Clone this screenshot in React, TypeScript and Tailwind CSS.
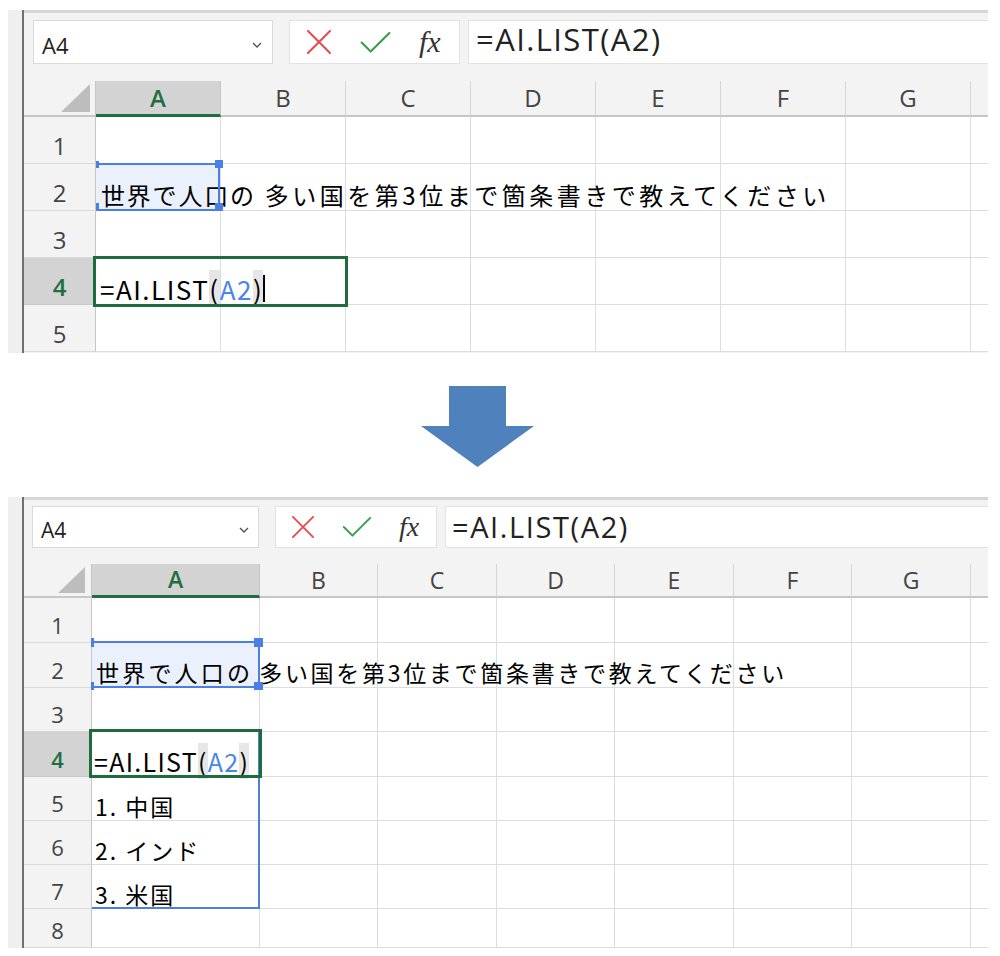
import React from "react";

const COLS = ["A", "B", "C", "D", "E", "F", "G"];
const JP = "font-['Noto_Sans_CJK_JP',sans-serif]";

function Cancel({ className }: { className: string }) {
  return (
    <svg viewBox="0 0 24 24" fill="none" className={className}>
      <path d="M1 1 L23 23 M23 1 L1 23" stroke="#e84a50" strokeWidth="2" strokeLinecap="round" />
    </svg>
  );
}

function Enter({ className }: { className: string }) {
  return (
    <svg viewBox="0 0 32 22" fill="none" className={className}>
      <path d="M1.5 11 L11 20.5 L30.5 1" stroke="#3a9e4b" strokeWidth="2.2" strokeLinecap="round" strokeLinejoin="round" />
    </svg>
  );
}

function Chevron({ className }: { className: string }) {
  return (
    <svg viewBox="0 0 10 6" fill="none" className={className}>
      <path d="M1 1 L5 5 L9 1" stroke="#555" strokeWidth="1.4" />
    </svg>
  );
}

function Corner({ className }: { className: string }) {
  return (
    <svg viewBox="0 0 29 28" className={className}>
      <polygon points="29,0 29,28 0,28" fill="#bdbdbd" />
    </svg>
  );
}

function FormulaText() {
  return (
    <>
      =AI.LIST<span className="bg-[#e6e6e6]">(</span>
      <span className="text-[#4a86e8]">A2</span>
      <span className="bg-[#e6e6e6]">)</span>
    </>
  );
}

function TopShot() {
  const rows = [1, 2, 3, 4, 5];
  return (
    <div className="mt-[10px] ml-[8px] w-[980px] h-[343px] flex overflow-hidden">
      <div className="w-[14px] bg-[#efefef]" />
      <div className="w-[2px] bg-[#707070]" />
      <div className="flex-1 flex flex-col border-t-[3px] border-t-[#d6d6d6] bg-[#f3f3f3]">
        {/* toolbar */}
        <div className="flex items-start h-[68px] pt-[7px] pl-[9px] shrink-0">
          <div className="w-[240px] h-[44px] bg-white border border-[#dadada] flex items-center justify-between pl-[8px] pr-[10px] pt-[6px]">
            <span className="text-[22px] leading-none text-[#222]">A4</span>
            <Chevron className="w-[10px] h-[6px]" />
          </div>
          <div className="ml-[16px] w-[171px] h-[44px] bg-white border border-[#e2e2e2] flex items-center">
            <Cancel className="ml-[17px] w-[24px] h-[24px]" />
            <Enter className="ml-[29px] w-[31px] h-[21px]" />
            <span className="ml-[28px] font-['Liberation_Serif',serif] italic text-[30px] leading-none text-[#333]">fx</span>
          </div>
          <div className="ml-[8px] flex-1 h-[44px] bg-white border-y border-l border-[#e2e2e2] flex items-center pl-[7px] pb-[6px]">
            <span className="text-[31px] leading-none text-[#222] tracking-[1.4px]">=AI.LIST(A2)</span>
          </div>
        </div>
        {/* grid */}
        <div className="relative grid grid-cols-[72px_125px_125px_125px_125px_125px_125px_125px_17px] grid-rows-[36px_47px_47px_47px_47px_47px]">
          <div className="bg-[#f3f3f3] border-b-2 border-b-[#c6c6c6] border-r border-r-[#c6c6c6] flex items-end justify-end pr-[5px] pb-[3px]">
            <Corner className="w-[29px] h-[28px]" />
          </div>
          {COLS.map((c) =>
            c === "A" ? (
              <div key={c} className="bg-[#d3d3d3] border-b-[3px] border-b-[#1e6e42] border-r border-r-[#c6c6c6] flex items-center justify-center text-[24px] font-semibold text-[#1e6e42]">
                A
              </div>
            ) : (
              <div key={c} className="bg-[#f3f3f3] border-b-2 border-b-[#c6c6c6] border-r border-r-[#d6d6d6] flex items-center justify-center text-[24px] text-[#444]">
                {c}
              </div>
            )
          )}
          <div className="bg-[#f3f3f3] border-b-2 border-b-[#c6c6c6]" />
          {rows.map((r) => (
            <React.Fragment key={r}>
              {r === 4 ? (
                <div className="bg-[#d3d3d3] border-r border-r-[#c6c6c6] border-b border-b-[#c9c9c9] flex items-end justify-center pb-[5px] text-[24px] leading-none font-semibold text-[#1e6e42]">
                  {r}
                </div>
              ) : (
                <div className="bg-[#f3f3f3] border-r border-r-[#c6c6c6] border-b border-b-[#d9d9d9] flex items-end justify-center pb-[5px] text-[24px] leading-none text-[#444]">
                  {r}
                </div>
              )}
              {COLS.map((c) => {
                if (r === 2 && c === "A") {
                  return (
                    <div key={c} className="bg-[#ebf1fc] border-r border-b border-[#dcdcdc] flex items-end pl-[5px] pb-[3px]">
                      <span className={`relative z-10 whitespace-nowrap text-[24px] leading-none tracking-[1.8px] text-black ${JP}`}>
                        世界で人口の<span className="ml-[9px] tracking-[3.5px]">多い国を第3位まで箇条書きで教えてください</span>
                      </span>
                    </div>
                  );
                }
                if (r === 4 && c === "A") {
                  return (
                    <div key={c} className="bg-white border-r border-b border-[#dcdcdc] flex items-end pl-[4px] pb-[2px]">
                      <span className={`relative z-10 whitespace-nowrap text-[26px] leading-none tracking-[1.5px] text-black ${JP}`}>
                        <FormulaText />
                        <span className="inline-block align-bottom w-[2px] h-[27px] bg-black" />
                      </span>
                    </div>
                  );
                }
                return <div key={c} className="bg-white border-r border-b border-[#dcdcdc]" />;
              })}
              <div className="bg-white border-b border-[#dcdcdc]" />
            </React.Fragment>
          ))}
          {/* A2 reference highlight */}
          <div className="absolute z-20 left-[72px] top-[82px] w-[124px] h-[48px] border-t-2 border-r-2 border-b-2 border-[#4a7fe5]" />
          <div className="absolute z-20 left-[72px] top-[80px] w-[3px] h-[7px] bg-[#4a7fe5]" />
          <div className="absolute z-20 left-[191px] top-[79px] w-[8px] h-[8px] bg-[#4a7fe5]" />
          <div className="absolute z-20 left-[72px] top-[122px] w-[3px] h-[8px] bg-[#4a7fe5]" />
          <div className="absolute z-20 left-[191px] top-[122px] w-[8px] h-[8px] bg-[#4a7fe5]" />
          {/* active cell */}
          <div className="absolute z-20 left-[69px] top-[175px] w-[255px] h-[51px] border-[3px] border-[#1e6b3d]" />
        </div>
      </div>
    </div>
  );
}

function BottomShot() {
  const rows = [1, 2, 3, 4, 5, 6, 7, 8];
  const list: Record<number, string> = { 5: "1. 中国", 6: "2. インド", 7: "3. 米国" };
  return (
    <div className="mt-[30px] ml-[8px] w-[980px] h-[451px] flex overflow-hidden">
      <div className="w-[14px] bg-[#efefef]" />
      <div className="w-[2px] bg-[#707070]" />
      <div className="flex-1 flex flex-col border-t-[3px] border-t-[#d6d6d6] bg-[#f3f3f3]">
        {/* toolbar */}
        <div className="flex items-start h-[64px] pt-[6px] pl-[8px] shrink-0">
          <div className="w-[227px] h-[42px] bg-white border border-[#dadada] flex items-center justify-between pl-[8px] pr-[9px] pt-[6px]">
            <span className="text-[21px] leading-none text-[#222]">A4</span>
            <Chevron className="w-[10px] h-[6px]" />
          </div>
          <div className="ml-[16px] w-[162px] h-[42px] bg-white border border-[#e2e2e2] flex items-center">
            <Cancel className="ml-[16px] w-[22px] h-[22px]" />
            <Enter className="ml-[28px] w-[30px] h-[20px]" />
            <span className="ml-[27px] font-['Liberation_Serif',serif] italic text-[28px] leading-none text-[#333]">fx</span>
          </div>
          <div className="ml-[8px] flex-1 h-[42px] bg-white border-y border-l border-[#e2e2e2] flex items-center pl-[6px] pb-[2px]">
            <span className="text-[29px] leading-none text-[#222] tracking-[1.6px]">=AI.LIST(A2)</span>
          </div>
        </div>
        {/* grid */}
        <div className="relative grid grid-cols-[68px_168px_118px_119px_118px_119px_118px_119px_17px] grid-rows-[34px_45px_45px_44px_45px_44px_44px_44px_39px]">
          <div className="bg-[#f3f3f3] border-b-2 border-b-[#c6c6c6] border-r border-r-[#c6c6c6] flex items-end justify-end pr-[6px] pb-[3px]">
            <Corner className="w-[27px] h-[26px]" />
          </div>
          {COLS.map((c) =>
            c === "A" ? (
              <div key={c} className="bg-[#d3d3d3] border-b-[3px] border-b-[#1e6e42] border-r border-r-[#c6c6c6] flex items-center justify-center text-[23px] font-semibold text-[#1e6e42]">
                A
              </div>
            ) : (
              <div key={c} className="bg-[#f3f3f3] border-b-2 border-b-[#c6c6c6] border-r border-r-[#d6d6d6] flex items-center justify-center text-[23px] text-[#444]">
                {c}
              </div>
            )
          )}
          <div className="bg-[#f3f3f3] border-b-2 border-b-[#c6c6c6]" />
          {rows.map((r) => (
            <React.Fragment key={r}>
              {r === 4 ? (
                <div className="bg-[#d3d3d3] border-r border-r-[#c6c6c6] border-b border-b-[#c9c9c9] flex items-end justify-center pb-[6px] text-[22px] leading-none font-semibold text-[#1e6e42]">
                  {r}
                </div>
              ) : (
                <div className="bg-[#f3f3f3] border-r border-r-[#c6c6c6] border-b border-b-[#d9d9d9] flex items-end justify-center pb-[6px] text-[22px] leading-none text-[#444]">
                  {r}
                </div>
              )}
              {COLS.map((c) => {
                if (r === 2 && c === "A") {
                  return (
                    <div key={c} className="bg-[#ebf1fc] border-r border-b border-[#dcdcdc] flex items-end pl-[4px] pb-[3px]">
                      <span className={`relative z-10 whitespace-nowrap text-[23px] leading-none tracking-[3.2px] text-black ${JP}`}>
                        世界で人口の<span className="ml-[6px] tracking-[2.7px]">多い国を第3位まで箇条書きで教えてください</span>
                      </span>
                    </div>
                  );
                }
                if (r === 4 && c === "A") {
                  return (
                    <div key={c} className="bg-white border-r border-b border-[#dcdcdc] flex items-end pl-[2px] pb-[2px]">
                      <span className={`relative z-10 whitespace-nowrap text-[25px] leading-none tracking-[1.3px] text-black ${JP}`}>
                        <FormulaText />
                      </span>
                    </div>
                  );
                }
                if (c === "A" && list[r]) {
                  return (
                    <div key={c} className="bg-white border-r border-b border-[#dcdcdc] flex items-end pl-[3px] pb-[2px]">
                      <span className={`whitespace-nowrap text-[23px] leading-none tracking-[2px] text-black ${JP}`}>{list[r]}</span>
                    </div>
                  );
                }
                return <div key={c} className="bg-white border-r border-b border-[#dcdcdc]" />;
              })}
              <div className="bg-white border-b border-[#dcdcdc]" />
            </React.Fragment>
          ))}
          {/* A2 reference highlight */}
          <div className="absolute z-20 left-[68px] top-[77px] w-[168px] h-[47px] border-t-2 border-r-2 border-b-2 border-[#4a7fe5]" />
          <div className="absolute z-20 left-[67px] top-[74px] w-[3px] h-[9px] bg-[#4a7fe5]" />
          <div className="absolute z-20 left-[230px] top-[74px] w-[9px] h-[9px] bg-[#4a7fe5]" />
          <div className="absolute z-20 left-[67px] top-[118px] w-[3px] h-[8px] bg-[#4a7fe5]" />
          <div className="absolute z-20 left-[230px] top-[118px] w-[9px] h-[8px] bg-[#4a7fe5]" />
          {/* spill range */}
          <div className="absolute z-20 left-[68px] top-[168px] w-[168px] h-[177px] border-r-2 border-b-2 border-[#4f7fd9]" />
          {/* active cell */}
          <div className="absolute z-30 left-[65px] top-[165px] w-[173px] h-[49px] border-[3px] border-[#1e6b3d]" />
        </div>
      </div>
    </div>
  );
}

export default function App() {
  return (
    <div className="w-[1000px] h-[956px] bg-white overflow-hidden font-['Open_Sans',sans-serif] flex flex-col">
      <TopShot />
      <svg viewBox="0 0 113 81" className="block ml-[421px] mt-[33px] w-[113px] h-[81px] shrink-0">
        <polygon points="28,0 85,0 85,40 113,40 56.5,81 0,40 28,40" fill="#4f81bd" />
      </svg>
      <BottomShot />
    </div>
  );
}
